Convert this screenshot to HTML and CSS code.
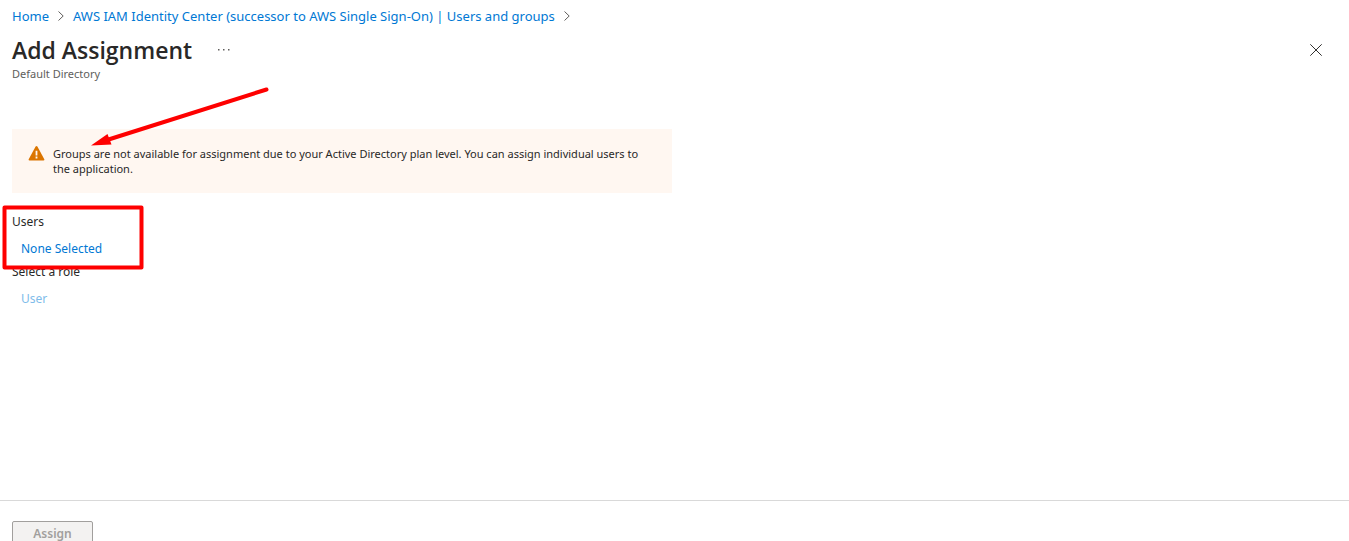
FILE: index.html
```html
<!DOCTYPE html>
<html lang="en">
<head>
<meta charset="utf-8">
<title>Add Assignment</title>
<link rel="stylesheet" href="styles.css">
</head>
<body>
<div class="page">
  <nav class="breadcrumb" aria-label="Breadcrumb">
    <a href="#">Home</a>
    <svg class="chevron" viewBox="0 0 6 10" aria-hidden="true"><path d="M.5.5 5.2 5 .5 9.500"/></svg>
    <a href="#">AWS IAM Identity Center (successor to AWS Single Sign-On) | Users and groups</a>
    <svg class="chevron" viewBox="0 0 6 10" aria-hidden="true"><path d="M.5.5 5.2 5 .5 9.500"/></svg>
  </nav>
  <header class="blade-header">
    <div class="title-row">
      <h1 class="title">Add Assignment</h1>
      <button class="icon-button" type="button" aria-label="More">
        <svg class="dots" viewBox="0 0 12 2" aria-hidden="true"><path d="M0 0h1.500v1.500H0zM5 0h1.500v1.500H5zM10 0h1.500v1.500H10z"/></svg>
      </button>
      <button class="icon-button close" type="button" aria-label="Close">
        <svg class="cross" viewBox="0 0 12 12" aria-hidden="true"><path d="M.3.3 11.700 11.700M11.700.3.3 11.700"/></svg>
      </button>
    </div>
    <p class="subtitle">Default Directory</p>
  </header>
  <main class="content">
    <div class="notice" role="alert">
      <svg class="warning" viewBox="0 0 16 15" aria-hidden="true">
        <path class="warning-body" d="M7.100.6Q8-.6 8.900.6L15.800 13.200Q16.200 14.500 15 14.500H1Q-.2 14.500.2 13.200Z"/>
        <path class="warning-mark" d="M7.100 4.800h1.800v4.700H7.100zM7.100 10.600h1.800v1.800H7.100z"/>
      </svg>
      <p class="notice-text">Groups are not available for assignment due to your Active Directory plan level. You can assign individual users to the application.</p>
    </div>
    <section class="field">
      <h2 class="label">Users</h2>
      <a class="picker" href="#">None Selected</a>
    </section>
    <section class="field">
      <h2 class="label">Select a role</h2>
      <a class="picker disabled" aria-disabled="true">User</a>
    </section>
  </main>
  <footer class="footer">
    <button class="assign" type="button" disabled>Assign</button>
  </footer>
  <svg class="annotations" viewBox="0 0 280 280" aria-hidden="true">
    <path class="stroke" d="M266.500 89.500 107 140"/>
    <path class="head" d="M91 145.500 107.500 134 111.500 144.500Z"/>
    <rect class="stroke frame" x="4.500" y="207.500" width="137" height="60"/>
  </svg>
</div>
</body>
</html>
```
FILE: styles.css
```css
* {
  box-sizing: border-box;
}

body {
  margin: 0;
  overflow: hidden;
  background: #fff;
  color: #292827;
  font: 12px/18px "Segoe UI", "Noto Sans", sans-serif;
}

h1, h2, p {
  margin: 0;
  font-weight: 400;
}

a {
  color: #0078d4;
  text-decoration: none;
}

.page {
  position: relative;
  display: flex;
  flex-direction: column;
  min-height: calc(100vh + 26px);
}

.breadcrumb {
  display: flex;
  align-items: center;
  gap: 9px;
  padding: 7px 12px 0;
  font-size: 13px;
}

.chevron {
  width: 6px;
  height: 10px;
  fill: none;
  stroke: #605e5c;
}

.blade-header {
  padding: 9px 25px 0 12px;
}

.title-row {
  display: flex;
  align-items: center;
  gap: 24px;
}

.title {
  font-family: "Segoe UI", "Open Sans", sans-serif;
  font-size: 23px;
  font-weight: 600;
  line-height: 32px;
}

.icon-button {
  display: flex;
  align-items: center;
  justify-content: center;
  width: 16px;
  height: 16px;
  padding: 0;
  border: 0;
  background: none;
}

.close {
  margin-left: auto;
}

.dots {
  width: 12px;
  height: 2px;
  fill: #605e5c;
}

.cross {
  width: 12px;
  height: 12px;
  stroke: #323130;
}

.subtitle {
  color: #605e5c;
  font-size: 11px;
  line-height: 16px;
}

.content {
  flex: 1;
  padding: 47px 12px 0;
}

.notice {
  display: flex;
  gap: 8px;
  max-width: 660px;
  margin-bottom: 20px;
  padding: 17px 16px;
  background: #fff7f1;
}

.warning {
  flex: none;
  width: 17px;
  height: 15px;
}

.warning-body {
  fill: #db7500;
}

.warning-mark {
  fill: #fff7f1;
}

.notice-text {
  font-size: 11px;
  line-height: 15px;
}

.field {
  margin-bottom: 5px;
}

.label {
  font-size: 12px;
  line-height: 18px;
}

.picker {
  display: block;
  padding: 9px 9px 0;
}

.disabled {
  color: #80bcea;
}

.footer {
  padding: 20px 12px;
  border-top: 1px solid #d9d9d9;
}

.assign {
  display: block;
  width: 81px;
  height: 26px;
  padding: 0;
  border: 1px solid #a19f9d;
  border-radius: 2px;
  background: #f3f2f1;
  color: #a19f9d;
  font: inherit;
  font-weight: 600;
}

.annotations {
  position: absolute;
  top: 0;
  left: 0;
  width: 280px;
  height: 280px;
  pointer-events: none;
}

.stroke {
  fill: none;
  stroke: #fe0000;
  stroke-width: 4px;
  stroke-linecap: round;
}

.frame {
  stroke-linejoin: round;
}

.head {
  fill: #fe0000;
}
```
